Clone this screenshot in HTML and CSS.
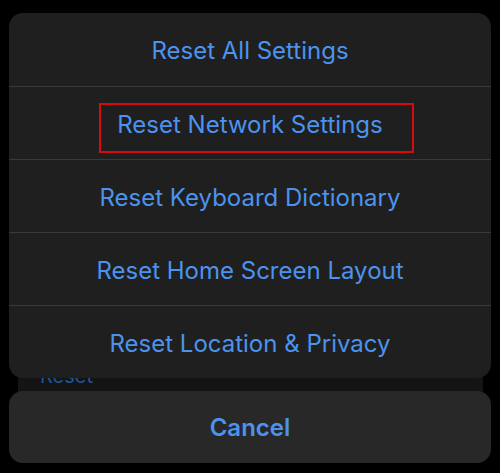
FILE: index.html
```html
<!DOCTYPE html>
<html>
<head>
<meta charset="utf-8">
<link rel="stylesheet" href="styles.css">
</head>
<body>
<div class="stage">
  <div class="backdrop">
    <div class="backdrop-panel">
      <span class="backdrop-text">Reset</span>
    </div>
  </div>
  <div class="sheet">
    <div class="group">
      <div class="row">Reset All Settings</div>
      <div class="row highlighted">Reset Network Settings<span class="marker"></span></div>
      <div class="row">Reset Keyboard Dictionary</div>
      <div class="row">Reset Home Screen Layout</div>
      <div class="row">Reset Location &amp; Privacy</div>
    </div>
    <div class="cancel">Cancel</div>
  </div>
</div>
</body>
</html>
```

FILE: styles.css
```css
html, body {
  margin: 0;
  padding: 0;
  background: #000;
}
body {
  width: 500px;
  height: 473px;
  overflow: hidden;
  font-family: Inter, "Liberation Sans", sans-serif;
}
.stage {
  display: grid;
  width: 500px;
  height: 473px;
}
.backdrop, .sheet {
  grid-area: 1 / 1;
}
.backdrop {
  padding: 300px 17px 0 18px;
}
.backdrop-panel {
  background: #141414;
  height: 100px;
  padding: 64px 0 0 22px;
  box-sizing: border-box;
}
.backdrop-text {
  color: #1f5595;
  font-size: 20px;
}
.sheet {
  position: relative;
  padding: 13px 9px 0 9px;
  display: flex;
  flex-direction: column;
  gap: 13px;
}
.group {
  background: #1f1f1f;
  border-radius: 14px;
  overflow: hidden;
}
.row {
  position: relative;
  height: 73px;
  padding-top: 2px;
  display: flex;
  align-items: center;
  justify-content: center;
  color: #4b93ee;
  font-size: 24px;
  border-top: 1px solid #393939;
  box-sizing: border-box;
}
.row:first-child {
  border-top: none;
}
.marker {
  position: absolute;
  left: 90px;
  top: 16px;
  width: 315px;
  height: 50px;
  border: 2px solid #d80c0c;
  box-sizing: border-box;
}
.cancel {
  background: #282828;
  border-radius: 14px;
  height: 72px;
  display: flex;
  align-items: center;
  justify-content: center;
  color: #4b93ee;
  font-size: 24px;
  font-weight: 600;
}
```
